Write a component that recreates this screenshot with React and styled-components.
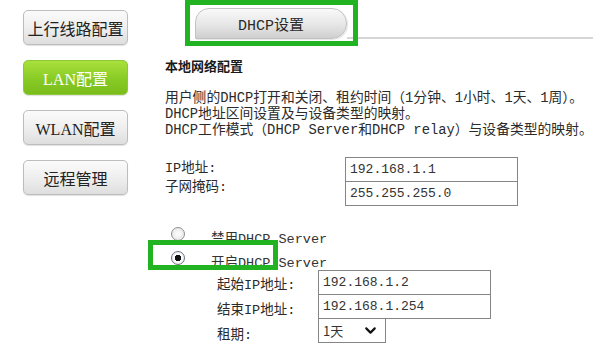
import React from 'react';
import styled, { createGlobalStyle } from 'styled-components';
import { ChevronDown } from 'lucide-react';

const GlobalStyle = createGlobalStyle`
  body {
    margin: 0;
    background: #fff;
    font-family: "Liberation Mono", "Noto Sans CJK SC", monospace;
    color: #2b2b2b;
  }
`;

const menu = [
    { label: '上行线路配置' },
    { label: 'LAN配置', active: true },
    { label: 'WLAN配置' },
    { label: '远程管理' },
];

const Page = styled.div`
  display: flex;
  width: 600px;
  height: 350px;
  overflow: hidden;
  background: #fff;
`;

const Sidebar = styled.nav`
  width: 150px;
  flex-shrink: 0;
  box-sizing: border-box;
  padding: 10px 0 0 23px;
  display: flex;
  flex-direction: column;
  gap: 15px;
`;

const MenuButton = styled.div`
  width: 105px;
  height: 35px;
  box-sizing: border-box;
  border-radius: 5px;
  display: flex;
  align-items: center;
  justify-content: center;
  font-size: 16px;
  white-space: nowrap;
  font-family: "Liberation Serif", "Noto Sans CJK SC", serif;
  color: ${({ active }) => (active ? '#fff' : '#222')};
  border: 1px solid ${({ active }) => (active ? '#8cc83a' : '#bdbdbd')};
  background: ${({ active }) => (active
        ? 'linear-gradient(#a9e03c, #86c924 60%, #7bbd1c)'
        : 'linear-gradient(#fbfbfb, #ececec 60%, #dedede)')};
  box-shadow: 0 1px 1px rgba(0, 0, 0, 0.12);
`;

const Main = styled.main`
  flex: 1;
  display: flex;
  flex-direction: column;
  padding: 0 8px 0 15px;
`;

const TabRow = styled.div`
  position: relative;
  display: flex;
  align-items: flex-end;
  height: 39px;
  padding-left: 30px;
`;

const Tab = styled.div`
  width: 152px;
  height: 31px;
  box-sizing: border-box;
  display: flex;
  align-items: center;
  justify-content: center;
  font-size: 15px;
  font-family: "Liberation Mono", "Noto Sans CJK SC", monospace;
  color: #2a2a2a;
  border: 1px solid #c2c2c2;
  border-radius: 14px 15px 15px 0 / 14px 15px 15px 0;
  background: linear-gradient(#f9f9f9, #e6e6e6 55%, #cfcfcf);
  box-shadow: 1px 1px 1px rgba(0, 0, 0, 0.1);
`;

const TabLine = styled.div`
  flex: 1;
  height: 2px;
  background: #d6d6d6;
`;

const Highlight = styled.div`
  position: absolute;
  box-sizing: border-box;
  border: 5px solid #22b322;
  left: ${({ left }) => left}px;
  top: ${({ top }) => top}px;
  width: ${({ w }) => w}px;
  height: ${({ h }) => h}px;
  pointer-events: none;
`;

const Title = styled.h3`
  margin: 18px 0 0;
  font-size: 13px;
  line-height: 17px;
  font-weight: bold;
  font-family: "Noto Sans CJK SC", sans-serif;
  color: #1a1a1a;
`;

const Intro = styled.p`
  margin: 17px 0 0;
  font-size: 13.8px;
  line-height: 16px;
  white-space: nowrap;
`;

const FieldGrid = styled.div`
  display: grid;
  grid-template-columns: ${({ labelWidth }) => labelWidth}px 173px;
  margin: ${({ top }) => top}px 0 0 ${({ indent }) => indent || 0}px;
`;

const LabelCol = styled.div`
  display: flex;
  flex-direction: column;
  padding-top: ${({ pad }) => pad}px;
  font-size: 13.5px;
  line-height: ${({ lh }) => lh}px;
`;

const InputCol = styled.div`
  display: flex;
  flex-direction: column;
`;

const TextBox = styled.div`
  height: 25px;
  box-sizing: border-box;
  border: 1px solid #858585;
  padding-left: 4px;
  display: flex;
  align-items: center;
  font-size: 13px;
  color: #333;
  background: #fff;
  & + & {
    margin-top: -1px;
  }
`;

const SelectBox = styled(TextBox)`
  width: 68px;
  justify-content: space-between;
  padding-right: 6px;
  font-family: "Noto Sans CJK SC", sans-serif;
  && {
    margin-top: -1px;
  }
`;

const RadioGroup = styled.div`
  position: relative;
  margin-top: 16px;
  display: flex;
  flex-direction: column;
`;

const RadioRow = styled.label`
  display: flex;
  align-items: center;
  height: 24px;
  padding-left: 6px;
  gap: 26px;
  font-size: 13.5px;
`;

const RadioDot = styled.span`
  width: 14px;
  height: 14px;
  box-sizing: border-box;
  border-radius: 50%;
  border: 1px solid ${({ checked }) => (checked ? '#6a7480' : '#8e8e8e')};
  background: radial-gradient(circle, ${({ checked }) => (checked ? '#111 0 3px, #fff 3.5px' : '#fff 0')}, #e0e0e0 100%);
`;

const RadioText = styled.span`
  padding-top: 6px;
  color: #333;
`;

const App = () => (
    <Page>
        <GlobalStyle />
        <Sidebar>
            {menu.map((item) => (
                <MenuButton key={item.label} active={item.active}>{item.label}</MenuButton>
            ))}
        </Sidebar>
        <Main>
            <TabRow>
                <Tab>DHCP设置</Tab>
                <TabLine />
                <Highlight left={20} top={0} w={173} h={46} />
            </TabRow>
            <Title>本地网络配置</Title>
            <Intro>
                用户侧的DHCP打开和关闭、租约时间（1分钟、1小时、1天、1周）。<br />
                DHCP地址区间设置及与设备类型的映射。<br />
                DHCP工作模式（DHCP Server和DHCP relay）与设备类型的映射。
            </Intro>
            <FieldGrid labelWidth={180} top={18}>
                <LabelCol pad={2} lh={19}>
                    <span>IP地址:</span>
                    <span>子网掩码:</span>
                </LabelCol>
                <InputCol>
                    <TextBox>192.168.1.1</TextBox>
                    <TextBox>255.255.255.0</TextBox>
                </InputCol>
            </FieldGrid>
            <RadioGroup>
                <RadioRow>
                    <RadioDot />
                    <RadioText>禁用DHCP Server</RadioText>
                </RadioRow>
                <RadioRow>
                    <RadioDot checked />
                    <RadioText>开启DHCP Server</RadioText>
                </RadioRow>
                <Highlight left={-17} top={18} w={130} h={30} />
            </RadioGroup>
            <FieldGrid labelWidth={101} top={0} indent={52}>
                <LabelCol pad={3} lh={25}>
                    <span>起始IP地址:</span>
                    <span>结束IP地址:</span>
                    <span>租期:</span>
                </LabelCol>
                <InputCol>
                    <TextBox>192.168.1.2</TextBox>
                    <TextBox>192.168.1.254</TextBox>
                    <SelectBox>
                        1天
                        <ChevronDown size={17} strokeWidth={3} color="#111" />
                    </SelectBox>
                </InputCol>
            </FieldGrid>
        </Main>
    </Page>
);

export default App;
